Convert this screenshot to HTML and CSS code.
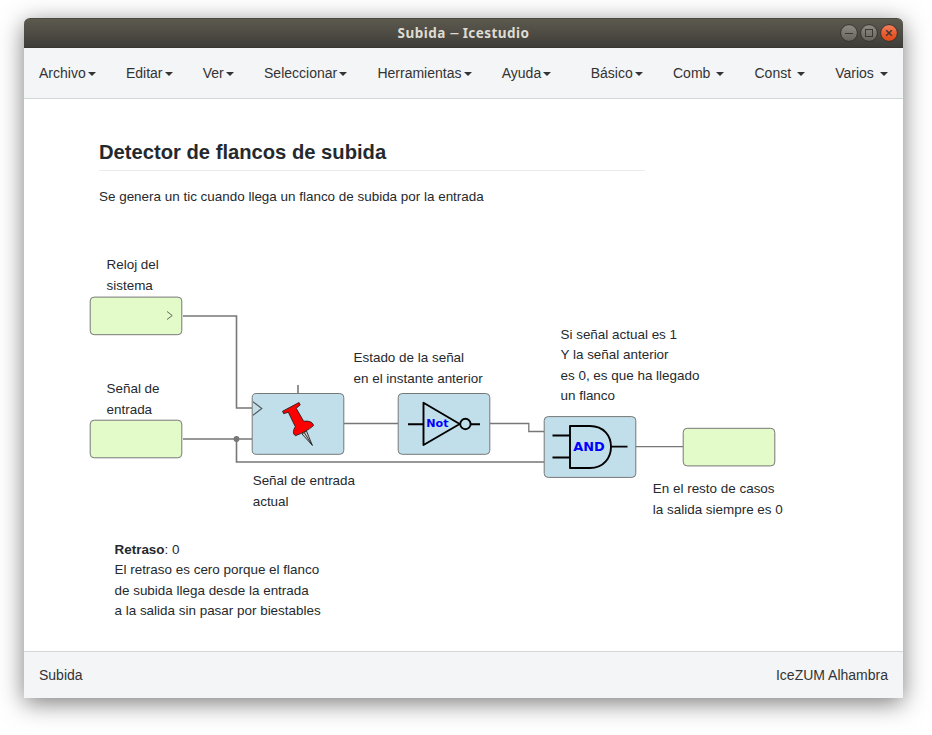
FILE: index.html
```html
<!DOCTYPE html>
<html lang="es">
<head>
<meta charset="utf-8">
<title>Subida — Icestudio</title>
<link rel="stylesheet" href="styles.css">
</head>
<body>
<div class="window">
  <header class="titlebar">
    <div class="title">Subida <span class="dash">—</span> Icestudio</div>
    <div class="controls">
      <svg width="60" height="20" viewBox="0 0 60 20">
        <defs>
          <linearGradient id="gray" x2="0" y2="1"><stop offset="0" stop-color="#8e8c84"/><stop offset="1" stop-color="#65635c"/></linearGradient>
          <linearGradient id="orange" x2="0" y2="1"><stop offset="0" stop-color="#f48260"/><stop offset=".55" stop-color="#e95a2c"/><stop offset="1" stop-color="#df4a17"/></linearGradient>
        </defs>
        <g stroke="#35342f" stroke-width="1">
          <circle cx="10" cy="10" r="8.4" fill="url(#gray)"/>
          <circle cx="30" cy="10" r="8.4" fill="url(#gray)"/>
          <circle cx="50" cy="10" r="8.4" fill="url(#orange)"/>
        </g>
        <g fill="none" stroke="#3a3934">
          <path d="M6 10.5h8"/>
          <rect x="26.5" y="6.5" width="7" height="7"/>
          <path d="M47.2 7.2l5.600 5.600M52.800 7.200l-5.600 5.600" stroke-width="1.500"/>
        </g>
      </svg>
    </div>
  </header>
  <nav class="menu">
    <div class="group">
      <a class="item">Archivo<i class="caret"></i></a>
      <a class="item">Editar<i class="caret"></i></a>
      <a class="item">Ver<i class="caret"></i></a>
      <a class="item">Seleccionar<i class="caret"></i></a>
      <a class="item">Herramientas<i class="caret"></i></a>
      <a class="item">Ayuda<i class="caret"></i></a>
    </div>
    <div class="group">
      <a class="item">Básico<i class="caret"></i></a>
      <a class="item">Comb <i class="caret"></i></a>
      <a class="item">Const <i class="caret"></i></a>
      <a class="item">Varios <i class="caret"></i></a>
    </div>
  </nav>
  <main class="canvas">
    <section class="intro">
      <h1>Detector de flancos de subida</h1>
      <p>Se genera un tic cuando llega un flanco de subida por la entrada</p>
    </section>
    <svg class="diagram" width="879" height="552" viewBox="24 99 879 552">
      <g class="wire">
        <path d="M183 316H236.500V408H252"/>
        <path d="M183 439H252M236.500 439V462H544"/>
        <path d="M298 385V393"/>
        <path class="thin" d="M344 423.500H398"/>
        <path class="thin" d="M490 423.500H528.800V431.500H544"/>
        <path class="thin" d="M636 446.700H683"/>
      </g>
      <circle cx="236.500" cy="439" r="2.900" fill="#777"/>
      <g class="port">
        <rect x="90.200" y="297.100" width="91.600" height="37.600" rx="4"/>
        <rect x="90.200" y="420.200" width="91.600" height="37.600" rx="4"/>
        <rect x="683.200" y="428.300" width="91.600" height="37.600" rx="4"/>
      </g>
      <path class="clock small" d="M167 311.500l5.200 4-5.200 4"/>
      <g class="block">
        <rect x="252.200" y="393.500" width="91.600" height="60.800" rx="4"/>
        <rect x="398.200" y="393.500" width="91.600" height="60.800" rx="4"/>
        <rect x="544.200" y="416.600" width="91.600" height="60.800" rx="4"/>
      </g>
      <path class="clock" d="M253 401.800l8.800 6.700-8.800 6.700"/>
      <g stroke="#222" stroke-width=".9" stroke-linejoin="round">
        <path d="M302 434L306.500 431L312.300 445.300Z" fill="#ccc"/>
        <path d="M304.500 433L312.300 445.300" fill="none"/>
        <path d="M282.500 411.300L299 402.500L300.200 405L296.200 408.300L303.700 421.300C308 420.700 312.500 421.500 313.600 425.500C308.500 430 303 432.800 295.500 435.700C292.300 433.800 293.200 430 295.300 426.700L288.300 412.200L283.700 413.700Z" fill="#f00"/>
      </g>
      <g class="gate">
        <path d="M408 424.200H423.500M423.500 402.700V445L459.700 424ZM471 424.200H480"/>
        <circle cx="465.400" cy="424" r="5.200"/>
        <path d="M552.500 435.500H570M552.500 457.500H570M570 426H590C604 426 611 436 611 446.700S604 468 590 468H570ZM611 446.600H627.500"/>
      </g>
      <text class="gate-name" x="426.300" y="427" font-size="11.100">Not</text>
      <text class="gate-name" x="573.300" y="451" font-size="12.900">AND</text>
    </svg>
    <p class="note short clock-note">Reloj del<br>sistema</p>
    <p class="note short input-note">Señal de<br>entrada</p>
    <p class="note short prev-note">Estado de la señal<br>en el instante anterior</p>
    <p class="note short current-note">Señal de entrada<br>actual</p>
    <p class="note and-note">Si señal actual es 1<br>Y la señal anterior<br>es 0, es que ha llegado<br>un flanco</p>
    <p class="note short output-note">En el resto de casos<br>la salida siempre es 0</p>
    <p class="note delay-note"><b>Retraso</b>: 0<br>El retraso es cero porque el flanco<br>de subida llega desde la entrada<br>a la salida sin pasar por biestables</p>
  </main>
  <footer class="status"><span>Subida</span><span>IceZUM Alhambra</span></footer>
</div>
</body>
</html>
```
FILE: styles.css
```css
* { box-sizing: border-box; }
body {
  margin: 0;
  height: 735px;
  padding: 18px 29px 37px 24px;
  overflow: hidden;
  background: #fff;
  font-family: "Liberation Sans", Arial, sans-serif;
  color: #24292e;
}
.window {
  display: flex;
  flex-direction: column;
  height: 680px;
  border-radius: 6px 6px 0 0;
  box-shadow: 0 5px 24px rgba(0, 0, 0, .52);
}
.titlebar {
  display: grid;
  grid-template-columns: 64px 1fr 64px;
  align-items: center;
  height: 30px;
  border-radius: 6px 6px 0 0;
  border-top: 1px solid #4b4940;
  border-bottom: 1px solid #3a3733;
  background: linear-gradient(#5c5a4f, #3f3d38);
}
.title {
  grid-column: 2;
  text-align: center;
  font: 700 13.5px/28px "Noto Sans", sans-serif;
  letter-spacing: .45px;
  color: #dfdbd2;
  white-space: nowrap;
}
.dash { display: inline-block; width: 9px; transform: scaleX(.65); transform-origin: left; font-weight: 400; }
.controls svg { display: block; }
.menu {
  display: flex;
  justify-content: space-between;
  height: 51px;
  background: #f4f5f7;
  border-bottom: 1px solid #cfd8d8;
}
.group { display: flex; }
.item {
  padding: 15px;
  font-size: 14px;
  line-height: 20px;
  color: #333;
  white-space: pre;
}
.caret {
  display: inline-block;
  margin-left: 2.25px;
  vertical-align: middle;
  border: 4px solid transparent;
  border-top-color: #333;
  border-bottom: 0;
}
.canvas { position: relative; flex: 1; background: #fff; }
.intro { width: 546px; margin-left: 75px; padding-top: 40px; }
.intro h1 {
  height: 32px;
  margin: 0 0 16px;
  border-bottom: 1px solid #eaecef;
  font-size: 20.2px;
  line-height: 26px;
}
.intro p { margin: 0; font-size: 13.45px; line-height: 20px; }
.diagram { position: absolute; inset: 0; }
.wire { fill: none; stroke: #777; stroke-width: 1.6; }
.wire .thin { stroke-width: 1.3; }
.port rect { fill: #e2fbc8; stroke: #777; }
.block rect { fill: #c1dfea; stroke: #777; }
.clock { fill: none; stroke: #555; stroke-width: 1.1; }
.clock.small { stroke-width: .9; }
.gate { fill: none; stroke: #000; stroke-width: 1.9; stroke-linejoin: round; }
.gate-name { font-family: "DejaVu Sans", sans-serif; font-weight: 700; fill: #00f; }
.note {
  position: absolute;
  margin: 0;
  font-size: 13.45px;
  line-height: 20.3px;
  white-space: nowrap;
}
.note.short { line-height: 21px; }
.clock-note { left: 82.5px; top: 155px; }
.input-note { left: 82.5px; top: 279px; }
.prev-note { left: 329.5px; top: 248px; }
.current-note { left: 228.7px; top: 371px; }
.and-note { left: 536.5px; top: 226px; }
.output-note { left: 628.8px; top: 379px; }
.delay-note { left: 90.5px; top: 441px; }
.status {
  display: flex;
  justify-content: space-between;
  align-items: center;
  height: 47px;
  padding: 0 15px;
  border-top: 1px solid #d3d7da;
  background: #f4f5f7;
  font-size: 14px;
  color: #333;
}
```
